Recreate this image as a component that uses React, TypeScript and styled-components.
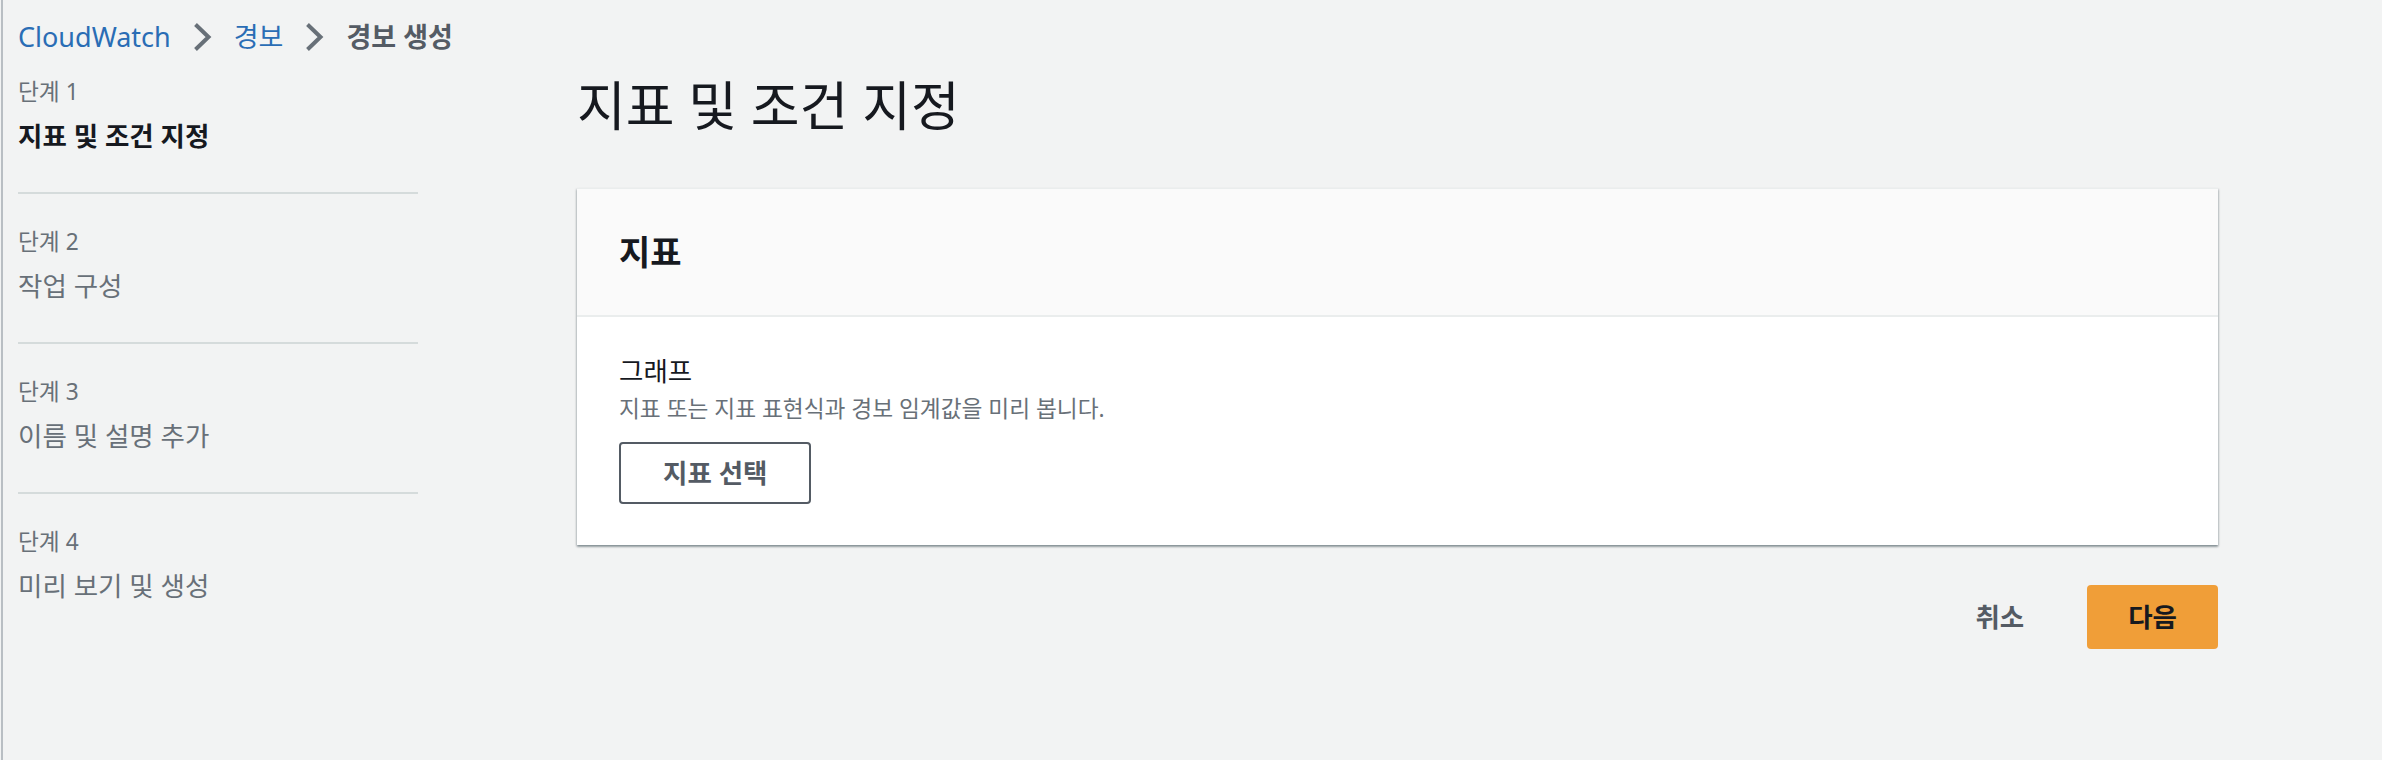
import styled, { createGlobalStyle } from "styled-components";

const GlobalStyle = createGlobalStyle`
  html, body {
    margin: 0;
    padding: 0;
    background: #f2f3f3;
  }
  body {
    font-family: "Noto Sans", "Noto Sans CJK KR", sans-serif;
    color: #16191f;
  }
`;

const Page = styled.div`
  min-height: 100vh;
  margin-left: 1px;
  border-left: 2px solid #b9bec3;
  padding: 17px 164px 0 15px;
  box-sizing: border-box;
`;

const Breadcrumbs = styled.nav`
  display: flex;
  align-items: center;
  gap: 22px;
  height: 40px;
  font-size: 27px;
  line-height: 40px;
`;

const Crumb = styled.a<{ $current?: boolean }>`
  color: ${(p) => (p.$current ? "#545b64" : "#2a6db5")};
  font-weight: ${(p) => (p.$current ? 700 : 400)};
  text-decoration: none;
`;

const Chevron = () => (
  <svg width="19" height="30" viewBox="0 0 19 30" aria-hidden>
    <polyline
      points="2.5,2.5 15.5,15 2.5,27.5"
      fill="none"
      stroke="#687078"
      strokeWidth="4"
      strokeLinejoin="miter"
    />
  </svg>
);

const Layout = styled.div`
  display: flex;
  align-items: flex-start;
  margin-top: 19px;
`;

const Steps = styled.ol`
  list-style: none;
  margin: 0;
  padding: 0;
  width: 400px;
  flex: none;
`;

const Step = styled.li<{ $first?: boolean }>`
  padding: ${(p) => (p.$first ? "0" : "32px")} 0 36px;
  border-bottom: 2px solid #d5dbdb;
  display: flex;
  flex-direction: column;
  gap: 8px;

  &:last-child {
    border-bottom: none;
  }
`;

const StepLabel = styled.span`
  font-size: 22.7px;
  line-height: 32px;
  color: #687078;
`;

const StepTitle = styled.span<{ $active?: boolean }>`
  font-size: 26.5px;
  line-height: 40px;
  color: ${(p) => (p.$active ? "#16191f" : "#687078")};
  font-weight: ${(p) => (p.$active ? 700 : 400)};
`;

const Main = styled.main`
  flex: 1;
  margin-left: 159px;
  display: flex;
  flex-direction: column;
`;

const PageTitle = styled.h1`
  margin: 2px 0 0;
  font-size: 53px;
  line-height: 56px;
  font-weight: 400;
  color: #16191f;
`;

const Card = styled.section`
  margin-top: 54px;
  background: #ffffff;
  border-top: 1px solid #eaeded;
  box-shadow: 0 2px 2px 0 rgba(0, 28, 36, 0.3), 1px 1px 2px 0 rgba(0, 28, 36, 0.15),
    -1px 1px 2px 0 rgba(0, 28, 36, 0.15);
`;

const CardHeader = styled.header`
  height: 126px;
  display: flex;
  align-items: center;
  padding: 0 42px;
  background: #fafafa;
  border-bottom: 2px solid #eaeded;
`;

const CardTitle = styled.h2`
  margin: 0;
  font-size: 34px;
  line-height: 44px;
  font-weight: 700;
  color: #16191f;
`;

const CardBody = styled.div`
  padding: 36px 42px 41px;
  display: flex;
  flex-direction: column;
  align-items: flex-start;
`;

const FieldLabel = styled.div`
  font-size: 26.5px;
  line-height: 36px;
  color: #16191f;
`;

const FieldDescription = styled.div`
  margin-top: 5px;
  font-size: 22.7px;
  line-height: 30px;
  color: #687078;
`;

const Button = styled.button<{ $variant?: "normal" | "primary" | "link" }>`
  font-family: inherit;
  font-size: 26.5px;
  font-weight: 700;
  line-height: 36px;
  border-radius: 4px;
  cursor: pointer;
  box-sizing: border-box;
  ${(p) =>
    p.$variant === "primary"
      ? `
    height: 64px;
    padding: 0 41px;
    background: #f09e38;
    border: none;
    color: #16191f;
  `
      : p.$variant === "link"
      ? `
    height: 64px;
    padding: 0 41px;
    background: transparent;
    border: none;
    color: #545b64;
  `
      : `
    height: 62px;
    padding: 0 42px;
    background: #ffffff;
    border: 2px solid #545b64;
    color: #545b64;
  `}
`;

const SelectButton = styled(Button)`
  margin-top: 18px;
`;

const Footer = styled.div`
  margin-top: 40px;
  display: flex;
  justify-content: flex-end;
  align-items: center;
  gap: 22px;
`;

const steps = [
  { label: "단계 1", title: "지표 및 조건 지정" },
  { label: "단계 2", title: "작업 구성" },
  { label: "단계 3", title: "이름 및 설명 추가" },
  { label: "단계 4", title: "미리 보기 및 생성" },
];

export default function App() {
  return (
    <>
      <GlobalStyle />
      <Page>
        <Breadcrumbs>
          <Crumb href="#">CloudWatch</Crumb>
          <Chevron />
          <Crumb href="#">경보</Crumb>
          <Chevron />
          <Crumb $current>경보 생성</Crumb>
        </Breadcrumbs>
        <Layout>
          <Steps>
            {steps.map((s, i) => (
              <Step key={s.label} $first={i === 0}>
                <StepLabel>{s.label}</StepLabel>
                <StepTitle $active={i === 0}>{s.title}</StepTitle>
              </Step>
            ))}
          </Steps>
          <Main>
            <PageTitle>지표 및 조건 지정</PageTitle>
            <Card>
              <CardHeader>
                <CardTitle>지표</CardTitle>
              </CardHeader>
              <CardBody>
                <FieldLabel>그래프</FieldLabel>
                <FieldDescription>
                  지표 또는 지표 표현식과 경보 임계값을 미리 봅니다.
                </FieldDescription>
                <SelectButton>지표 선택</SelectButton>
              </CardBody>
            </Card>
            <Footer>
              <Button $variant="link">취소</Button>
              <Button $variant="primary">다음</Button>
            </Footer>
          </Main>
        </Layout>
      </Page>
    </>
  );
}
